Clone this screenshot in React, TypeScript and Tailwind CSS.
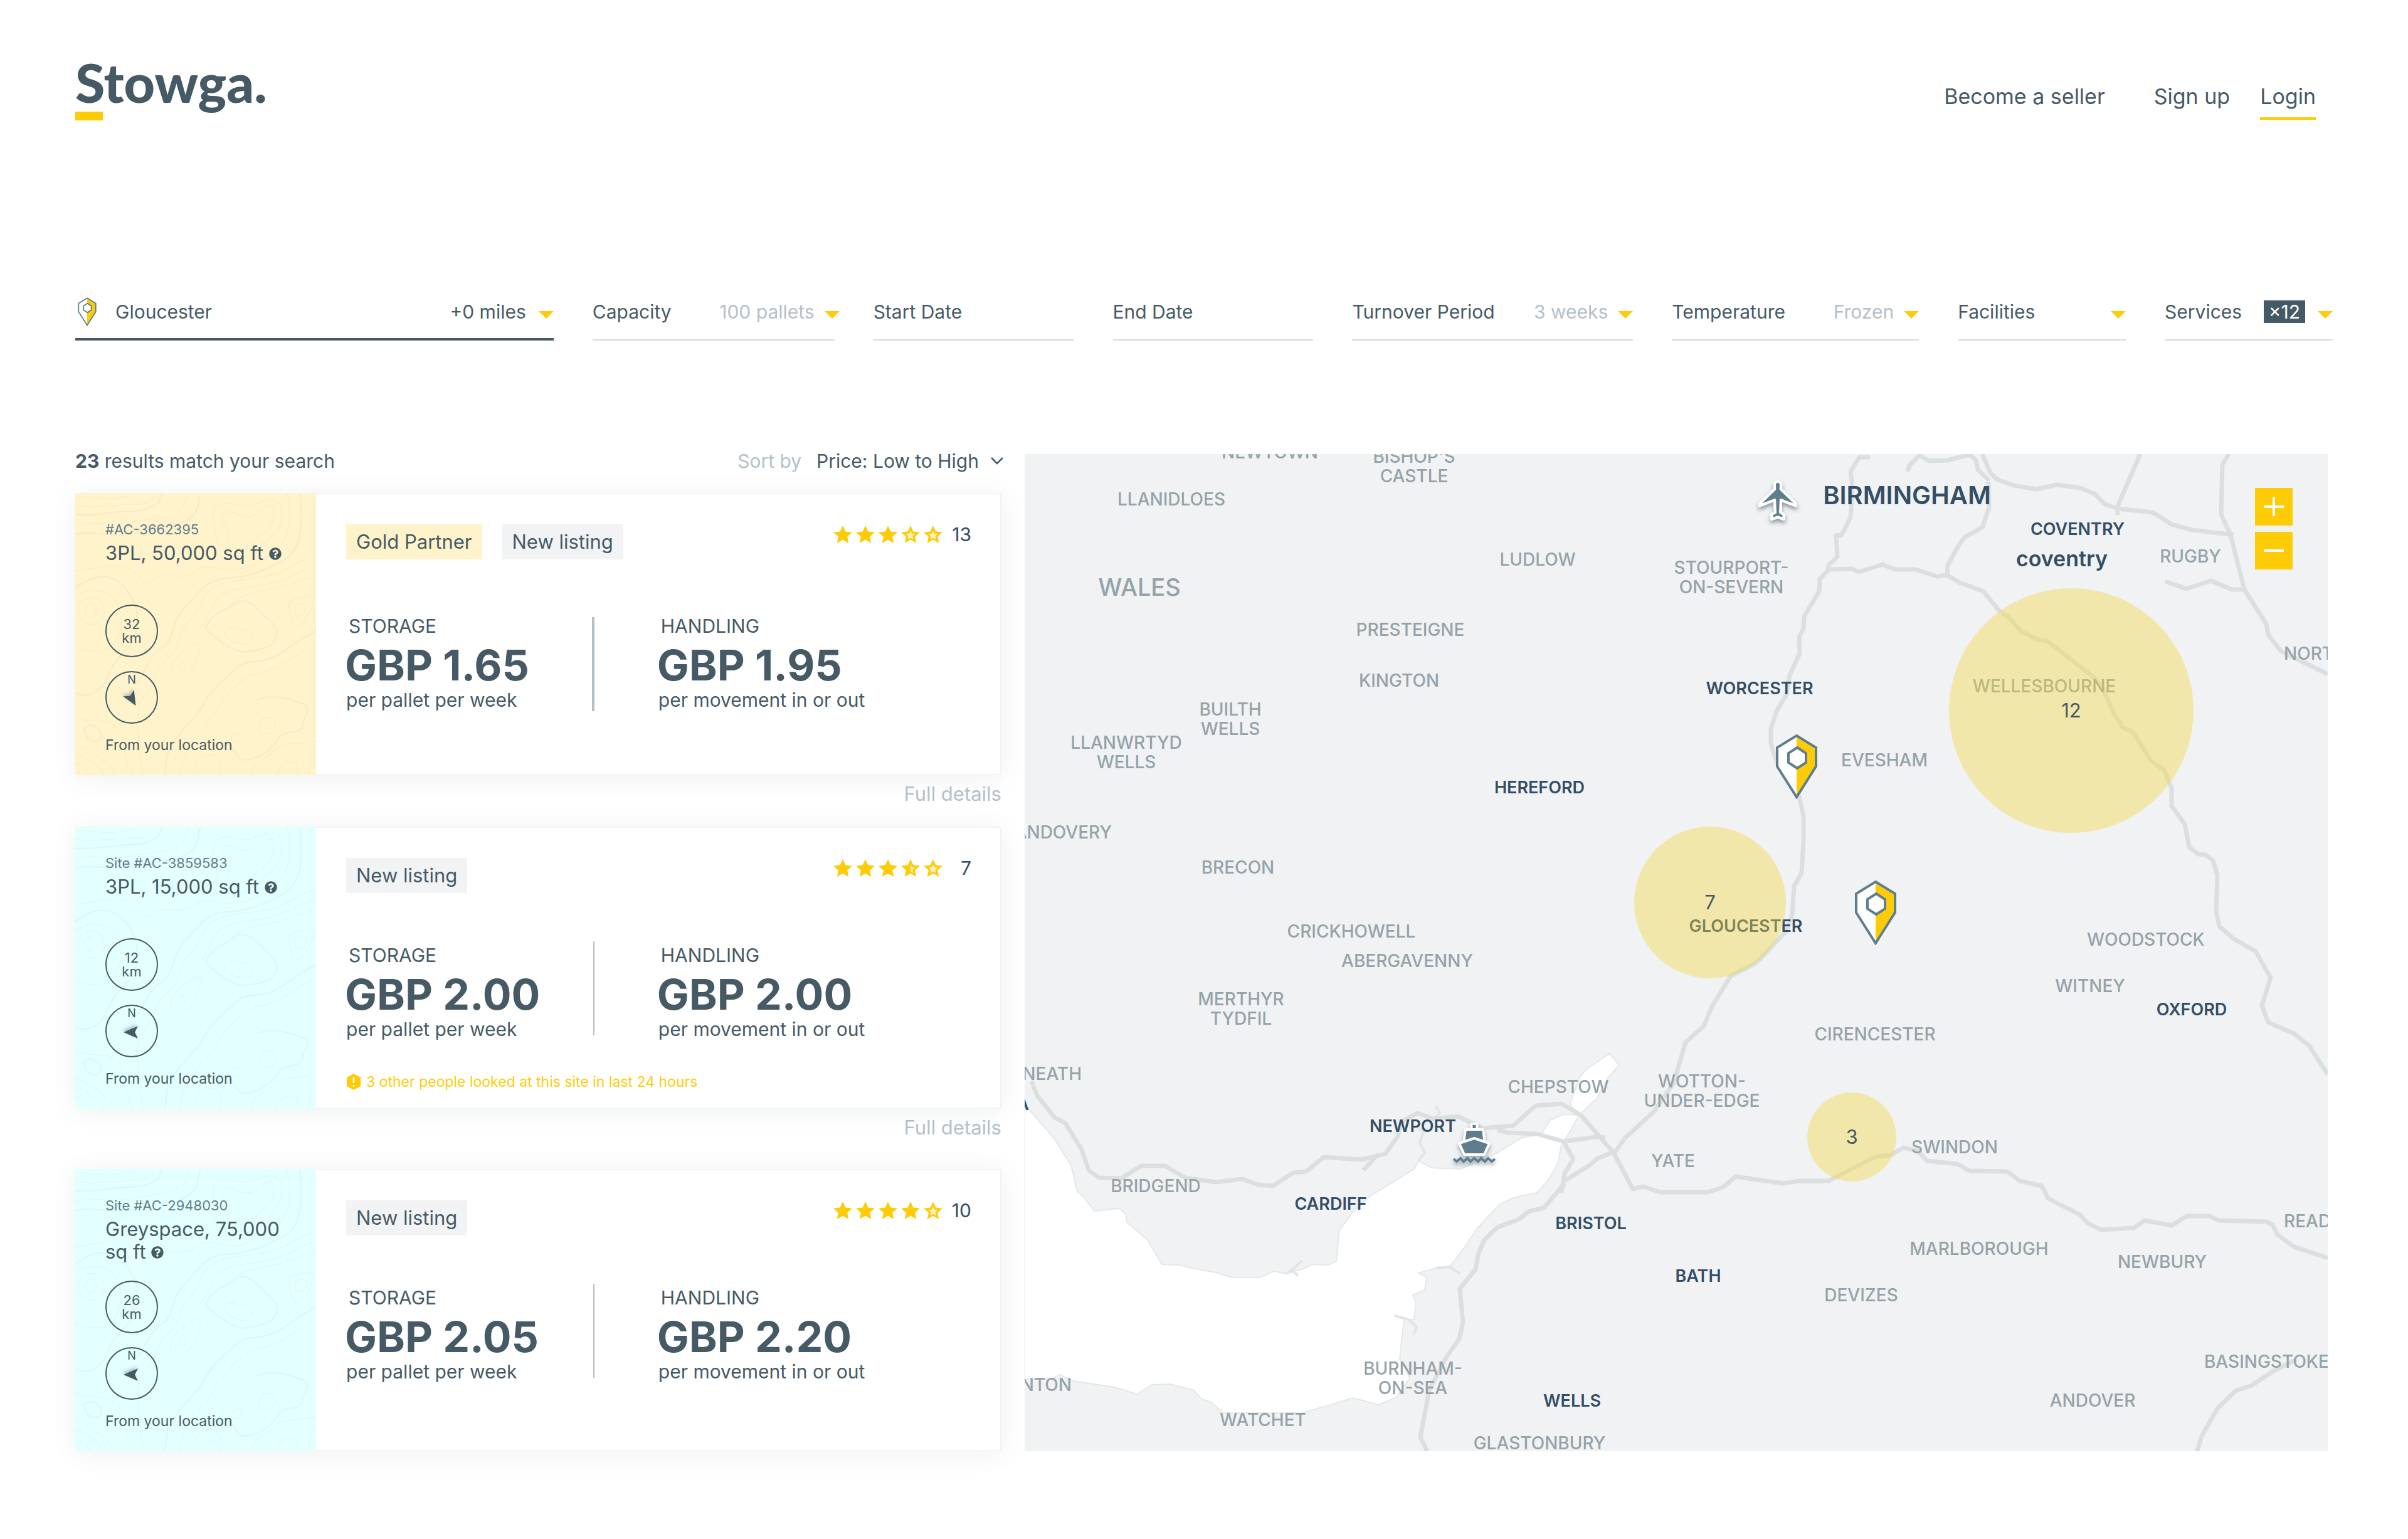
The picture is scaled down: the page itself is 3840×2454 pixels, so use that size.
import React from "react";
import { FaQuestionCircle } from "react-icons/fa";

interface Listing {
  id: string;
  title: string;
  distance: string;
  heading: number;
  gold: boolean;
  rating: number;
  reviews: number;
  storage: string;
  handling: string;
  notice?: string;
  details: boolean;
  spacing: string;
}

const listings: Listing[] = [
  {
    id: "#AC-3662395",
    title: "3PL, 50,000 sq ft",
    distance: "32",
    heading: 150,
    gold: true,
    rating: 3,
    reviews: 13,
    storage: "GBP 1.65",
    handling: "GBP 1.95",
    details: true,
    spacing: "mb-8",
  },
  {
    id: "Site #AC-3859583",
    title: "3PL, 15,000 sq ft",
    distance: "12",
    heading: 270,
    gold: false,
    rating: 3.5,
    reviews: 7,
    storage: "GBP 2.00",
    handling: "GBP 2.00",
    notice: "3 other people looked at this site in last 24 hours",
    details: true,
    spacing: "mb-[46px]",
  },
  {
    id: "Site #AC-2948030",
    title: "Greyspace, 75,000 sq ft",
    distance: "26",
    heading: 270,
    gold: false,
    rating: 4,
    reviews: 10,
    storage: "GBP 2.05",
    handling: "GBP 2.20",
    details: false,
    spacing: "",
  },
];

// The map drawing and everything pinned on it share these units
const MAP = { x: 1634, y: 724, width: 2078, height: 1590 };

const place = (x: number, y: number) => ({
  left: `${((x - MAP.x) / MAP.width) * 100}%`,
  top: `${((y - MAP.y) / MAP.height) * 100}%`,
});

interface Place {
  name: string;
  x: number;
  y: number;
  city?: boolean;
  anchor?: "left" | "right";
  size?: string;
}

const places: Place[] = [
  { name: "NEWTOWN", x: 2025, y: 721 },
  { name: "BISHOP'S\nCASTLE", x: 2255, y: 744 },
  { name: "LLANIDLOES", x: 1868, y: 796 },
  { name: "LUDLOW", x: 2452, y: 892 },
  { name: "WALES", x: 1817, y: 936, size: "text-[38px]" },
  { name: "PRESTEIGNE", x: 2249, y: 1004 },
  { name: "KINGTON", x: 2231, y: 1085 },
  { name: "BUILTH\nWELLS", x: 1962, y: 1147 },
  { name: "LLANWRTYD\nWELLS", x: 1796, y: 1200 },
  { name: "HEREFORD", x: 2455, y: 1255, city: true },
  { name: "LLANDOVERY", x: 1773, y: 1327, anchor: "right" },
  { name: "BRECON", x: 1974, y: 1383 },
  { name: "CRICKHOWELL", x: 2155, y: 1485 },
  { name: "ABERGAVENNY", x: 2244, y: 1532 },
  { name: "STOURPORT-\nON-SEVERN", x: 2761, y: 921 },
  { name: "BIRMINGHAM", x: 3041, y: 789, city: true, size: "text-[40px]" },
  { name: "COVENTRY", x: 3313, y: 843, city: true },
  { name: "coventry", x: 3288, y: 890, city: true, size: "text-[34px]" },
  { name: "RUGBY", x: 3493, y: 887 },
  { name: "NORTHAMPTON", x: 3642, y: 1042, anchor: "left" },
  { name: "WORCESTER", x: 2806, y: 1097, city: true },
  { name: "WELLESBOURNE", x: 3260, y: 1094 },
  { name: "EVESHAM", x: 3005, y: 1212 },
  { name: "GLOUCESTER", x: 2784, y: 1476, city: true },
  { name: "WOODSTOCK", x: 3422, y: 1498 },
  { name: "WITNEY", x: 3333, y: 1572 },
  { name: "OXFORD", x: 3495, y: 1609, city: true },
  { name: "MERTHYR\nTYDFIL", x: 1979, y: 1609 },
  { name: "NEATH", x: 1725, y: 1712, anchor: "right" },
  { name: "SWANSEA", x: 1641, y: 1760, city: true, anchor: "right" },
  { name: "CIRENCESTER", x: 2990, y: 1649 },
  { name: "CHEPSTOW", x: 2485, y: 1733 },
  { name: "WOTTON-\nUNDER-EDGE", x: 2714, y: 1740 },
  { name: "NEWPORT", x: 2253, y: 1795, city: true },
  { name: "SWINDON", x: 3117, y: 1829 },
  { name: "YATE", x: 2668, y: 1851 },
  { name: "BRIDGEND", x: 1843, y: 1891 },
  { name: "CARDIFF", x: 2122, y: 1919, city: true },
  { name: "BRISTOL", x: 2537, y: 1950, city: true },
  { name: "READING", x: 3642, y: 1947, anchor: "left" },
  { name: "MARLBOROUGH", x: 3156, y: 1991 },
  { name: "NEWBURY", x: 3448, y: 2012 },
  { name: "BATH", x: 2708, y: 2034, city: true },
  { name: "DEVIZES", x: 2968, y: 2065 },
  { name: "BASINGSTOKE", x: 3714, y: 2171, anchor: "right" },
  { name: "BURNHAM-\nON-SEA", x: 2253, y: 2198 },
  { name: "BRAUNTON", x: 1709, y: 2208, anchor: "right" },
  { name: "WELLS", x: 2507, y: 2233, city: true },
  { name: "ANDOVER", x: 3337, y: 2233 },
  { name: "WATCHET", x: 2014, y: 2264 },
  { name: "GLASTONBURY", x: 2455, y: 2301 },
];

const clusters = [
  { count: 12, x: 3303, y: 1133, size: 390 },
  { count: 7, x: 2727, y: 1439, size: 242 },
  { count: 3, x: 2953, y: 1813, size: 142 },
];

const pins = [
  { name: "Warehouse near Evesham", x: 2865, y: 1222 },
  { name: "Warehouse near Gloucester", x: 2991, y: 1455 },
];

const sea =
  "M1634 1760 L1640 1768 L1680 1814 L1687 1825 L1708 1858 L1718 1900 L1727 1907 L1745 1931 L1785 1927 L1795 1936 L1797 1949 L1830 1977 L1853 2016 L1880 2017 L1915 2025 L1939 2029 L1964 2037 L2009 2037 L2032 2027 L2051 2031 L2076 2024 L2094 2016 L2118 2017 L2131 2011 L2136 1962 L2157 1933 L2185 1907 L2223 1884 L2255 1864 L2262 1851 L2283 1862 L2329 1864 L2385 1840 L2427 1814 L2458 1809 L2472 1786 L2493 1777 L2514 1778 L2504 1760 L2520 1716 L2532 1703 L2567 1680 L2582 1698 L2564 1719 L2546 1752 L2518 1778 L2505 1802 L2490 1825 L2484 1856 L2469 1882 L2451 1902 L2413 1910 L2392 1920 L2357 1957 L2336 1988 L2311 2021 L2290 2022 L2262 2030 L2275 2037 L2272 2057 L2253 2065 L2258 2078 L2255 2104 L2239 2104 L2232 2166 L2248 2197 L2227 2228 L2199 2240 L2157 2229 L2122 2240 L2076 2253 L1950 2253 L1932 2236 L1915 2230 L1904 2217 L1866 2207 L1837 2208 L1813 2223 L1778 2212 L1711 2202 L1690 2192 L1676 2199 L1634 2199 Z";

const roads = [
  "M2982 729 L2965 729 L2951 752 L2954 775 L2951 825 L2937 853 L2928 854 L2930 888 L2916 901 L2914 911 L2902 923 L2901 943 L2877 983 L2876 1002 L2869 1016 L2870 1042 L2854 1076 L2849 1107 L2833 1134 L2824 1162 L2824 1186 L2833 1215 L2869 1270 L2876 1301 L2876 1343 L2873 1392 L2861 1413 L2858 1458 L2849 1484 L2806 1530 L2796 1538 L2760 1556 L2730 1605 L2717 1636 L2688 1662 L2669 1727 L2637 1773 L2592 1814 L2577 1835 L2546 1848 L2535 1858 L2495 1883",
  "M1645 1724 L1654 1747 L1682 1782 L1699 1791 L1725 1833 L1736 1866 L1753 1878 L1788 1879 L1820 1859 L1858 1859 L1890 1878 L1939 1885 L1981 1880 L2006 1889 L2030 1891 L2062 1870 L2083 1868 L2111 1845 L2171 1849 L2209 1840 L2229 1812 L2234 1789 L2260 1775 L2286 1784 L2325 1780 L2364 1799 L2413 1795 L2449 1763 L2490 1760 L2521 1778 L2573 1838 L2604 1896 L2620 1892 L2648 1901 L2723 1901 L2748 1893 L2768 1876 L2843 1887 L2869 1883 L2916 1883 L2992 1844 L3015 1842 L3035 1830 L3058 1835 L3073 1851 L3121 1856 L3141 1867 L3201 1868 L3221 1883 L3256 1891 L3266 1911 L3317 1937 L3329 1950 L3350 1961 L3403 1958 L3420 1946 L3463 1954 L3487 1939 L3524 1939 L3537 1946 L3614 1948 L3624 1953 L3632 1969 L3658 1988 L3712 2006",
  "M2197 1841 L2174 1866",
  "M2388 1802 L2406 1806 L2451 1808 L2493 1820 L2546 1813 L2560 1814",
  "M2493 1820 L2509 1848 L2495 1871 L2490 1902",
  "M2495 1887 L2462 1926 L2437 1932 L2423 1944 L2388 1957 L2367 1977 L2358 1998 L2353 2024 L2328 2055 L2333 2109 L2327 2135 L2307 2163 L2279 2217 L2265 2292 L2276 2314",
  "M2916 908 L2952 907 L2965 912 L3002 900 L3022 908 L3055 908 L3089 919 L3105 917 L3125 929 L3163 943 L3188 974 L3204 985 L3223 1007 L3249 1020 L3265 1022 L3340 1081 L3353 1097 L3370 1136 L3385 1160 L3402 1168 L3430 1213 L3451 1228 L3463 1257 L3463 1285 L3484 1314 L3491 1351 L3506 1362 L3517 1363 L3529 1372 L3536 1395 L3534 1453 L3539 1477 L3562 1497 L3597 1517 L3621 1559 L3607 1603 L3617 1630 L3658 1648 L3682 1667 L3712 1713",
  "M3105 917 L3106 901 L3125 867 L3134 856 L3161 841 L3172 809 L3171 768",
  "M3042 752 L3045 742 L3061 726 L3076 735 L3105 734 L3141 725 L3151 734 L3154 749 L3172 766",
  "M3161 724 L3174 754 L3184 764 L3211 774 L3247 780 L3280 773 L3317 778 L3340 787 L3357 804 L3377 811 L3433 817 L3463 836 L3496 845 L3562 853",
  "M3413 724 L3377 807 L3377 821",
  "M3554 724 L3544 741 L3542 820 L3557 853 L3579 940 L3614 995 L3617 1012 L3637 1038 L3712 1075",
  "M3453 927 L3486 939 L3526 926 L3559 940 L3579 940",
  "M3662 2168 L3629 2184 L3589 2210 L3566 2217 L3536 2246 L3511 2290 L3504 2314",
];

const creeks = [
  "M2262 1851 L2272 1838 L2264 1822 L2270 1806 L2258 1795 M2286 1784 L2296 1775 L2290 1764",
  "M2051 2031 L2064 2022 L2076 2010 M2070 2034 L2058 2024",
  "M2224 2098 L2246 2104 L2259 2116 L2254 2128",
  "M2290 2022 L2312 2020 L2328 2031",
];

const contours = [
  "M0 34 C30 38 52 30 82 29 C112 30 124 22 134 14 L138 0",
  "M0 20 C38 26 70 16 104 18 C118 16 126 8 126 0",
  "M0 7 C22 2 44 14 70 8 L92 4",
  "M0 52 C34 42 60 56 92 46 C128 40 156 42 170 24 C178 14 178 6 180 0",
  "M0 66 C40 58 66 76 98 62 C130 52 168 58 190 34 C198 22 196 8 200 0",
  "M236 34 C252 22 258 40 276 38 C296 36 300 18 312 20 C322 26 316 52 304 62 C290 70 284 84 268 88 C250 92 242 84 244 68 C246 54 228 46 236 34 Z",
  "M224 22 C244 10 262 24 280 20 C300 12 318 4 328 20 C334 44 322 66 306 76 C292 86 280 104 262 106 C238 110 222 100 224 82 C230 58 212 42 224 22 Z",
  "M338 0 C346 40 342 72 322 90 C296 112 270 124 244 122 C222 122 206 110 190 126 C170 142 140 122 122 140 C112 148 108 142 98 130 C84 116 66 112 40 118 L0 124",
  "M358 0 C364 50 360 84 340 102 C312 122 270 136 238 136 C206 138 190 168 172 186 C152 208 160 230 140 246 C112 262 112 292 94 304",
  "M384 100 C352 108 340 124 316 130 C282 140 250 136 226 148 C200 158 202 184 186 200 C164 218 170 244 154 258 C128 274 126 310 108 326 C96 340 98 380 108 450",
  "M384 116 C356 122 346 136 318 142 C284 152 250 150 232 164 C214 178 216 196 200 214",
  "M384 134 C352 138 340 150 312 154 C284 158 262 164 248 178",
  "M0 152 C30 128 56 128 76 148 C96 168 104 196 96 226 C88 252 62 262 52 290 C42 320 16 330 0 318",
  "M0 166 C20 152 46 150 62 170 C78 192 76 220 62 240 C46 258 16 254 0 246",
  "M8 176 C22 160 40 164 46 184 C48 202 34 214 20 208 C6 204 0 190 8 176 Z",
  "M18 178 C30 172 36 184 32 194 C26 202 14 196 16 186 Z",
  "M208 216 C216 192 244 186 258 174 C276 166 290 184 304 198 C320 210 330 226 312 242 C292 254 280 250 266 254 C244 248 222 232 208 216 Z",
  "M242 216 C252 210 262 220 272 218 C288 224 284 240 270 242 C254 240 232 232 242 216 Z",
  "M340 174 C356 166 374 160 380 168 C378 188 366 208 352 214 C342 204 344 188 340 174 Z",
  "M350 180 C360 174 372 176 370 182 C366 192 358 200 352 194 Z",
  "M384 220 C352 236 338 252 316 262 C290 274 276 262 256 280 C232 302 214 316 202 342 C188 364 164 380 150 410 C142 428 146 440 142 450",
  "M384 240 C362 250 344 268 320 278 C296 288 282 286 268 298 C244 316 232 336 218 358 C200 384 176 396 166 450",
  "M168 270 C176 268 180 276 174 282 C166 284 162 276 168 270 Z",
  "M152 290 C150 262 176 250 192 240 C206 238 196 256 194 268 C190 284 178 290 168 300",
  "M290 330 C318 318 350 332 368 338 C376 350 360 362 362 374 C352 386 334 376 324 392 C310 412 292 424 270 426 C250 422 262 408 240 400",
  "M296 364 C306 352 320 360 320 370 C318 382 300 390 292 380 Z",
  "M254 384 C262 380 268 388 262 396 C250 402 244 392 254 384 Z",
  "M0 356 C20 370 50 356 66 374 C80 388 74 420 92 450",
  "M14 376 C24 364 40 374 42 388 C36 402 16 398 14 376 Z",
  "M0 402 C24 410 46 424 66 450 M0 416 C20 422 36 434 46 450 M0 430 C12 434 20 442 24 450",
  "M190 450 C186 432 200 412 220 418 C240 428 228 436 232 450 M280 450 C282 428 304 426 318 410 C334 396 350 402 366 398 L384 396",
  "M320 450 C326 434 340 424 352 432 L356 450 M372 450 L376 420 L384 412",
];

const Caret: React.FC<{ className?: string }> = ({ className = "" }) => (
  <svg
    viewBox="0 0 24 12"
    aria-hidden="true"
    className={`pointer-events-none mt-2.5 ml-4 h-3 w-6 shrink-0 fill-[#fecc07] ${className}`}
  >
    <path d="M0 0 H24 L12 12 Z" />
  </svg>
);

const Pin: React.FC<{ className: string }> = ({ className }) => (
  <svg viewBox="0 0 66 104" aria-hidden="true" className={className}>
    <path d="M33 3 L2 22 V52 L33 101 Z" fill="#fff" />
    <path d="M33 3 L64 22 V52 L33 101 Z" fill="#fecc07" />
    <path
      d="M33 3 L64 22 V52 L33 101 L2 52 V22 Z"
      fill="none"
      stroke="#5f7d8c"
      strokeWidth="4"
    />
    <path
      d="M34 22 L48 31 V46 L34 55 L20 46 V31 Z"
      fill="#fff"
      stroke="#5f7d8c"
      strokeWidth="4"
    />
  </svg>
);

const star =
  "M15 0 L19.4 9.6 L30 10.7 L22.1 17.8 L24.3 28 L15 22.8 L5.7 28 L7.9 17.8 L0 10.7 L10.6 9.6 Z";

const Stars: React.FC<{ rating: number }> = ({ rating }) => (
  <div role="img" aria-label={`${rating} out of 5`} className="flex gap-1.5">
    {[0, 1, 2, 3, 4].map((index) => (
      <svg key={index} viewBox="0 0 30 28" className="h-7 w-[30px]">
        <path d={star} fill="#fecc07" />
        {index >= rating && (
          <path
            d="M15 8.5 L17 13 L22 13.6 L18.4 17 L19.4 22 L15 19.5 L10.6 22 L11.6 17 L8 13.6 L13 13 Z"
            fill="#fef3cb"
          />
        )}
        {index < rating && index + 1 > rating && (
          <path
            d="M15 8.5 L17 13 L22 13.6 L18.4 17 L19.4 22 L15 19.5 Z"
            fill="#fef3cb"
          />
        )}
      </svg>
    ))}
  </div>
);

const Header = () => (
  <header className="flex items-start justify-between pt-[90px] pr-[147px] pl-[120px]">
    <a href="#" className="block">
      <span className="block font-['Lato',sans-serif] text-[86px] leading-[82px] font-black">
        Stowga.
      </span>
      <span className="mt-1.5 block h-3.5 w-11 bg-[#fecc07]" />
    </a>
    <nav className="flex pt-[42px] text-[34px] leading-[44px]">
      <a href="#">Become a seller</a>
      <a href="#" className="ml-[78px]">
        Sign up
      </a>
      <a href="#" className="ml-12 border-b-4 border-[#fecc07] pb-[11px]">
        Login
      </a>
    </nav>
  </header>
);

interface FilterProps {
  id: string;
  label: string;
  value?: string;
  caretClass?: string;
}

const Filter: React.FC<FilterProps> = ({ id, label, value, caretClass }) => (
  <div className="flex items-center border-b-2 border-[#d6dbdf] pb-5">
    <label htmlFor={id} className="grow">
      {label}
    </label>
    <select
      id={id}
      className="field-sizing-content cursor-pointer appearance-none bg-transparent text-[#b4c0c9] outline-none"
    >
      <option>{value}</option>
    </select>
    <Caret className={caretClass} />
  </div>
);

const DateFilter: React.FC<{ label: string }> = ({ label }) => (
  <div className="flex items-center border-b-2 border-[#d6dbdf] pb-5">
    <input
      type="text"
      aria-label={label}
      placeholder={label}
      className="w-full bg-transparent outline-none placeholder:text-[#465a65]"
    />
  </div>
);

const SearchBar = () => (
  <form className="mt-[281px] grid grid-cols-[763fr_386fr_320fr_320fr_448fr_394fr_268fr_268fr] gap-x-[62px] px-[120px] text-[30px] leading-[48px] whitespace-nowrap">
    <div className="flex items-center border-b-4 border-[#465a65] pb-[18px]">
      <Pin className="ml-1 h-[46px] w-[30px] shrink-0" />
      <input
        type="text"
        aria-label="Location"
        defaultValue="Gloucester"
        className="ml-[30px] w-0 grow bg-transparent outline-none"
      />
      <select
        aria-label="Radius"
        className="field-sizing-content cursor-pointer appearance-none bg-transparent outline-none"
      >
        <option>+0 miles</option>
      </select>
      <Caret className="ml-5" />
    </div>
    <Filter id="capacity" label="Capacity" value="100 pallets" caretClass="-mr-2" />
    <DateFilter label="Start Date" />
    <DateFilter label="End Date" />
    <Filter id="turnover" label="Turnover Period" value="3 weeks" />
    <Filter id="temperature" label="Temperature" value="Frozen" />
    <Filter id="facilities" label="Facilities" />
    <div className="flex items-center border-b-2 border-[#d6dbdf] pb-5">
      <label htmlFor="services" className="grow">
        Services
      </label>
      <select
        id="services"
        className="field-sizing-content h-9 cursor-pointer appearance-none bg-[#465a65] px-2 text-[30px] leading-9 text-white outline-none"
      >
        <option>×12</option>
      </select>
      <Caret className="ml-5" />
    </div>
  </form>
);

const Price: React.FC<{ label: string; amount: string; unit: string }> = ({
  label,
  amount,
  unit,
}) => (
  <div className="whitespace-nowrap">
    <p className="pl-1 text-[30px] leading-[44px]">{label}</p>
    <p className="-ml-0.5 text-[68px] leading-[80px] font-bold">{amount}</p>
    <p className="text-[30px] leading-8">{unit}</p>
  </div>
);

const ListingCard: React.FC<{ listing: Listing }> = ({ listing }) => (
  <li className={listing.spacing}>
    <article className="flex min-h-[450px] shadow-[0_4px_36px_rgba(70,90,101,0.09)]">
      <div
        className={`relative flex w-[26%] shrink-0 flex-col pt-10 pr-12 pb-[30px] pl-12 ${
          listing.gold ? "bg-[#fef3cb]" : "bg-[#e3ffff]"
        }`}
      >
        <svg
          viewBox="0 0 384 450"
          preserveAspectRatio="xMidYMid slice"
          aria-hidden="true"
          className="absolute inset-0 h-full w-full"
        >
          <g fill="none" stroke="#465a65" strokeOpacity="0.05">
            {contours.map((d, index) => (
              <path key={d} d={d} strokeWidth={index % 4 === 0 ? 2 : 1} />
            ))}
          </g>
        </svg>
        <p className="relative text-[22px] leading-9 text-[#5f7d8c]">{listing.id}</p>
        <h2 className="relative mt-0.5 text-[31px] leading-9">
          {listing.title}{" "}
          <FaQuestionCircle className="inline-block size-5 align-baseline" />
        </h2>
        <p className="relative mt-auto flex size-[84px] flex-col items-center justify-center rounded-full border-2 border-[#465a65] text-[22px] leading-[22px]">
          <span>{listing.distance}</span>
          <span>km</span>
        </p>
        <div className="relative mt-[22px] flex size-[84px] flex-col items-center rounded-full border-2 border-[#465a65] pt-0.5 text-lg leading-5">
          <span>N</span>
          <svg
            viewBox="0 0 32 32"
            aria-hidden="true"
            className="mt-1 size-8 overflow-visible drop-shadow-[-2px_-3px_2px_rgba(70,90,101,0.35)]"
          >
            <path
              d="M16 3 L26 26 L16 21 L6 26 Z"
              fill="#465a65"
              transform={`rotate(${listing.heading} 16 16)`}
            />
          </svg>
        </div>
        <p className="relative mt-4 text-[23px] leading-9">From your location</p>
      </div>

      <div className="flex grow flex-col border-2 border-l-0 border-[#f1f3f4] bg-white pt-12 pr-[46px] pl-12">
        <div className="flex items-start justify-between">
          <div className="flex gap-8 text-[31px] leading-[56px]">
            {listing.gold && (
              <span className="bg-[#fef3cb] px-4">Gold Partner</span>
            )}
            <span className="bg-[#f1f3f4] px-4">New listing</span>
          </div>
          <div className="flex items-center">
            <Stars rating={listing.rating} />
            <span className="w-[46px] text-right text-[30px] leading-8 text-[#344e66]">
              {listing.reviews}
            </span>
          </div>
        </div>
        <div
          className={`grid grid-cols-[391fr_4px_600fr] items-start ${
            listing.gold ? "mt-[84px]" : "mt-[77px]"
          }`}
        >
          <Price label="STORAGE" amount={listing.storage} unit="per pallet per week" />
          <span
            className={`h-[150px] justify-self-end bg-[#b4c0c9] ${
              listing.gold ? "mt-2 w-1" : "w-0.5"
            }`}
          />
          <div className="pl-[102px]">
            <Price
              label="HANDLING"
              amount={listing.handling}
              unit="per movement in or out"
            />
          </div>
        </div>
        {listing.notice && (
          <p className="mt-[52px] flex items-center gap-2 text-[23px] leading-8 text-[#fecc07]">
            <svg viewBox="0 0 24 26" aria-hidden="true" className="h-[26px] w-6">
              <path d="M12 0 L23 6 V20 L12 26 L1 20 V6 Z" fill="#fecc07" />
              <path d="M12 6 V15 M12 18 V20.5" stroke="#fff" strokeWidth="2.5" />
            </svg>
            {listing.notice}
          </p>
        )}
      </div>
    </article>
    {listing.details && (
      <a
        href="#"
        className="mt-2.5 ml-auto block w-fit text-[31px] leading-10 text-[#b4c0c9]"
      >
        Full details
      </a>
    )}
  </li>
);

const Results = () => (
  <section>
    <div className="flex items-center justify-between text-[30px] leading-10">
      <p>
        <b>23</b> results match your search
      </p>
      <div className="-mr-1 flex items-center">
        <label htmlFor="sort" className="text-[#b4c0c9]">
          Sort by
        </label>
        <select
          id="sort"
          className="ml-6 field-sizing-content cursor-pointer appearance-none bg-transparent outline-none"
        >
          <option>Price: Low to High</option>
        </select>
        <svg
          viewBox="0 0 22 14"
          aria-hidden="true"
          className="pointer-events-none ml-[18px] h-3.5 w-[22px]"
        >
          <path
            d="M2 2 L11 11 L20 2"
            fill="none"
            stroke="#465a65"
            strokeWidth="2.5"
          />
        </svg>
      </div>
    </div>
    <ul className="mt-[31px]">
      {listings.map((listing) => (
        <ListingCard key={listing.id} listing={listing} />
      ))}
    </ul>
  </section>
);

const MapLabel: React.FC<{ item: Place }> = ({ item }) => {
  const shift =
    item.anchor === "left"
      ? ""
      : item.anchor === "right"
        ? "-translate-x-full"
        : "-translate-x-1/2";
  const size = item.size ?? (item.city ? "text-[27px]" : "text-[28px]");
  return (
    <span
      style={place(item.x, item.y)}
      className={`absolute -translate-y-1/2 text-center leading-[31px] whitespace-pre ${shift} ${size} ${
        item.city ? "font-semibold text-[#344e66]" : "font-medium text-[#95a3a8]"
      }`}
    >
      {item.name}
    </span>
  );
};

const MapPanel = () => (
  <section
    aria-label="Map"
    className="relative mt-[9px] overflow-hidden bg-[#f0f2f4]"
  >
    <svg
      viewBox="1634 724 2078 1590"
      preserveAspectRatio="none"
      aria-hidden="true"
      className="absolute inset-0 h-full w-full"
    >
      <path d={sea} fill="#fff" stroke="#e4e8e9" strokeWidth="2" />
      <g fill="none" strokeLinejoin="round">
        {creeks.map((d) => (
          <path key={d} d={d} stroke="#e1e5e6" strokeWidth="4" />
        ))}
        {roads.map((d) => (
          <path key={d} d={d} stroke="#dbdfe0" strokeWidth="7" />
        ))}
      </g>
    </svg>

    {places.map((item) => (
      <MapLabel key={item.name} item={item} />
    ))}

    {clusters.map((cluster) => (
      <button
        key={cluster.count}
        type="button"
        style={{
          ...place(cluster.x, cluster.y),
          width: `${(cluster.size / MAP.width) * 100}%`,
        }}
        className="absolute aspect-square -translate-1/2 rounded-full bg-[#f4d63f]/40 text-[31px]"
      >
        {cluster.count}
      </button>
    ))}

    {pins.map((pin) => (
      <button
        key={pin.name}
        type="button"
        aria-label={pin.name}
        style={place(pin.x, pin.y)}
        className="absolute -translate-1/2"
      >
        <Pin className="h-[104px] w-[66px]" />
      </button>
    ))}

    <svg
      viewBox="0 0 66 68"
      role="img"
      aria-label="Airport"
      style={place(2835, 797)}
      className="absolute h-[68px] w-[66px] -translate-1/2 overflow-visible drop-shadow-[0_4px_3px_rgba(70,90,101,0.6)]"
    >
      <path
        d="M33 3.500 L38.300 7.700 L38 17 L61.300 39.700 L62 43.700 L38 34.300 L37.300 54.300 L42.700 57 V65 L33 61.700 L23.300 65 V57 L28.700 54.300 L28 34.300 L4 43.700 L4.700 39.700 L28 17 L27.700 7.700 Z"
        fill="#5f7d8c"
        stroke="#fff"
        strokeWidth="4.500"
        strokeLinejoin="round"
      />
    </svg>

    <svg
      viewBox="0 0 68 68"
      role="img"
      aria-label="Port"
      style={place(2351, 1823)}
      className="absolute size-[68px] -translate-1/2 overflow-visible drop-shadow-[0_4px_3px_rgba(70,90,101,0.5)]"
    >
      <g fill="#5f7d8c" stroke="#fff" strokeWidth="4" strokeLinejoin="round">
        <path d="M29.500 3 H38.500 V13 H29.500 Z" />
        <path d="M20 12 H48 L51 34 H17 Z" />
        <path d="M34 26 L58 34 L50 52 H18 L10 34 Z" />
      </g>
      <path
        d="M1 59 L6 63 L12 58 L17 63 L23 58 L28 63 L34 58 L40 63 L45 58 L51 63 L56 58 L62 63 L67 59"
        fill="none"
        stroke="#5f7d8c"
        strokeWidth="4"
      />
    </svg>

    <div className="absolute top-[54px] right-14 flex flex-col gap-2.5">
      <button
        type="button"
        aria-label="Zoom in"
        className="flex size-[60px] items-center justify-center bg-[#fecc07]"
      >
        <svg viewBox="0 0 32 32" className="size-8">
          <path d="M0 16 H32 M16 1 V31" stroke="#fff" strokeWidth="4" />
        </svg>
      </button>
      <button
        type="button"
        aria-label="Zoom out"
        className="flex size-[60px] items-center justify-center bg-[#fecc07]"
      >
        <svg viewBox="0 0 32 32" className="size-8">
          <path d="M0 16 H32" stroke="#fff" strokeWidth="4" />
        </svg>
      </button>
    </div>
  </section>
);

const App = () => (
  <div className="bg-white pb-[140px] font-['Inter',sans-serif] text-[#465a65]">
    <Header />
    <SearchBar />
    <main className="mt-[172px] grid grid-cols-[1477fr_2078fr] gap-x-[37px] pr-32 pl-[120px]">
      <Results />
      <MapPanel />
    </main>
  </div>
);

export default App;
